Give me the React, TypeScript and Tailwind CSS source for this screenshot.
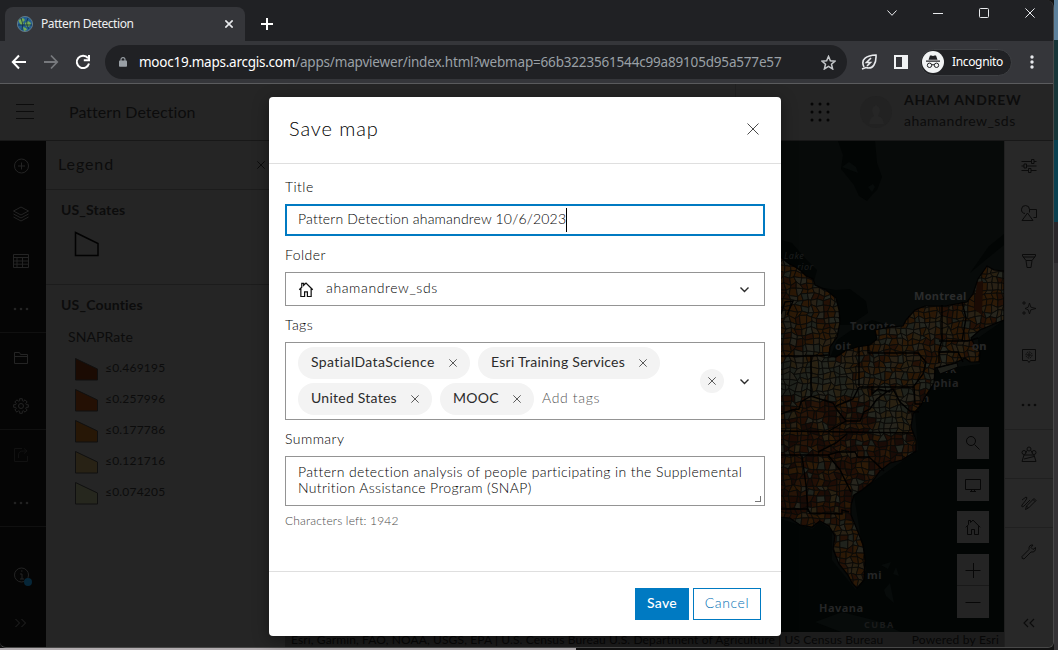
import React from "react";

const Icon = ({ className, box = 16, w = 1, children }: { className: string; box?: number; w?: number; children: React.ReactNode }) => (
  <svg viewBox={`0 0 ${box} ${box}`} className={`shrink-0 ${className}`} fill="none" stroke="currentColor" strokeWidth={w}>{children}</svg>
);
const Cross = ({ className, w = 1 }: { className: string; w?: number }) => (
  <Icon className={className} w={w} box={12}><path d="M.5.5l11 11M11.5.5l-11 11" /></Icon>
);
const Chevron = () => (
  <Icon className="h-[9px] w-[9px] text-[#2b2b2b]" box={9} w={1.4}><path d="M.5 2.500l4 4 4-4" /></Icon>
);
const House = ({ className, w = 1 }: { className: string; w?: number }) => (
  <Icon className={className} w={w}><path d="M.8 8.3L3.5 5.6V1.5h2v2L8 1.1l7.2 7.2M2.500 7.200v8.300h4v-5h3v5h4V7.200" /></Icon>
);
const Dots = ({ className }: { className: string }) => (
  <svg viewBox="0 0 16 4" className={`h-1 w-4 shrink-0 ${className}`} fill="currentColor"><circle cx="2" cy="2" r="1.3" /><circle cx="8" cy="2" r="1.3" /><circle cx="14" cy="2" r="1.3" /></svg>
);

function Chrome() {
  return (
    <header className="shrink-0 bg-[#202124] font-['Noto_Sans',sans-serif] text-white">
      <div className="flex h-[41px] items-start">
        <div className="mt-[7px] ml-[5px] flex h-[34px] w-[240px] items-center rounded-t-lg bg-[#35363a] pr-[12px] pl-[12px]">
          <svg viewBox="0 0 16 16" className="h-4 w-4"><circle cx="8" cy="8" r="7.600" fill="#245f93" stroke="#6d8791" strokeWidth=".8" /><path d="M2 4l4-2 2 2-2 2 1 2-3 1-2-3zM8 7l3-2 3 2-1 3-3 1-2-2zM6 11l3 1 1 2-3 1z" fill="#75ad52" /><path d="M1 9h14M4 2q3 6 1 12M11 2q-3 6 1 11" fill="none" stroke="#122c42" strokeWidth=".8" /></svg>
          <span className="ml-2 grow text-[12px] tracking-[-0.4px] text-[#eeeff0]">Pattern Detection</span>
          <Cross className="h-[8px] w-[8px] text-[#e8eaed]" w={2.400} />
        </div>
        <Icon className="mt-[18px] ml-[16px] h-3 w-3" box={12} w={2}><path d="M6 0v12M0 6h12" /></Icon>
        <div className="mt-[8px] mr-[18px] ml-auto flex items-center text-[#e8eaed]">
          <Icon className="h-[10px] w-[10px]" box={10}><path d="M.5 2.500L5 7.300l4.500-4.800" /></Icon>
          <Icon className="ml-[36px] h-[10px] w-[10px]" box={10}><path d="M0 5.500h10" /></Icon>
          <Icon className="ml-[36px] h-[10px] w-[10px]" box={10}><rect x=".5" y=".5" width="9" height="9" rx="1" /></Icon>
          <Cross className="ml-[36px] h-[10px] w-[10px]" w={1.200} />
        </div>
      </div>
      <div className="flex h-[42px] items-center bg-[#35363a]">
        <Icon className="ml-[11px] h-4 w-4" w={2}><path d="M15 8H2M8 1.500L1.800 8 8 14.500" /></Icon>
        <Icon className="ml-[16px] h-4 w-4 text-[#77797d]" w={1.800}><path d="M1 8h13M8 1.500L14.200 8 8 14.500" /></Icon>
        <Icon className="ml-[16px] h-4 w-4" w={2}><path d="M13 4.200A6.200 6.200 0 1 0 14 9.500M14 1v5.200H8.800" /></Icon>
        <div className="ml-[14px] flex h-[34px] w-[742px] items-center rounded-full bg-[#202124] pr-[11px] pl-[14px]">
          <svg viewBox="0 0 10 12" className="h-3 w-2"><rect y="4.200" width="10" height="7.800" rx="1" fill="#9aa0a6" /><path d="M2.500 5V3a2.500 2.500 0 0 1 5 0v2" fill="none" stroke="#9aa0a6" strokeWidth="1.400" /></svg>
          <span className="ml-[12px] grow text-[13.5px] whitespace-nowrap text-[#9aa0a6]"><span className="tracking-[-0.25px] text-white">mooc19.maps.arcgis.com</span><span className="tracking-[-0.18px]">/apps/mapviewer/index.html?webmap=66b3223561544c99a89105d95a577e57</span></span>
          <Icon className="h-[15px] w-[15px] text-[#c4c7ca]" w={1.600}><path d="M8 1.500l2 4.700 5 .4-3.800 3.300 1.200 5L8 12.200l-4.400 2.700 1.200-5L1 6.600l5-.400z" /></Icon>
        </div>
        <Icon className="ml-[14px] h-4 w-4 text-[#e8eaed]" w={1.600}><path d="M3 13C-1 5 6 1.500 15 1c.5 8-3 15-10 12.500L1 15M10 4L5.500 8.500h4L6 12" /></Icon>
        <svg viewBox="0 0 14 14" className="ml-[17px] h-[14px] w-[14px]"><path d="M0 0h14v14H0zM2 2v10h6V2z" fill="#f1f3f4" fillRule="evenodd" /></svg>
        <div className="ml-[12px] flex h-[27px] w-[92px] items-center rounded-full border border-[#3e4043] bg-[#202124]">
          <svg viewBox="0 0 22 22" className="ml-px h-[22px] w-[22px] shrink-0"><circle cx="11" cy="11" r="11" fill="#f1f3f4" /><path d="M4 9.500h14v1.200H4zM6.500 8.800L8 4.500h1.500l1.500.6 1.500-.6H14l1.500 4.300z" fill="#202124" /><g fill="none" stroke="#202124"><circle cx="7.500" cy="14.300" r="2.200" /><circle cx="14.500" cy="14.300" r="2.200" /><path d="M9.700 14q1.300-.8 2.600 0" /></g></svg>
          <span className="ml-[8px] text-[12px] tracking-[-0.35px]">Incognito</span>
        </div>
        <svg viewBox="0 0 4 14" className="ml-[18px] h-[14px] w-1" fill="#e8eaed"><circle cx="2" cy="2" r="1.700" /><circle cx="2" cy="7" r="1.700" /><circle cx="2" cy="12" r="1.700" /></svg>
      </div>
      <div className="h-px bg-[#5b5c5e]" />
    </header>
  );
}

function LeftRail() {
  return (
    <nav className="flex w-[46px] shrink-0 flex-col bg-[#050505] pr-1 text-[#242424]">
      <div className="-mr-1 flex h-[192px] flex-col items-center border-b border-[#101010] pt-[17px] pr-1">
        <Icon className="h-4 w-4"><circle cx="8.500" cy="8" r="7" /><path d="M8.500 4.500v7M5 8h7" /></Icon>
        <Icon className="mt-[32px] h-4 w-4"><path d="M.5 5L8 1l7.500 4L8 9zM.5 8L8 12l7.500-4M.5 11L8 15l7.500-4" /></Icon>
        <Icon className="mt-[31px] h-4 w-4"><path d="M.5 1.500h15v13H.5zM.5 4.500h15M.5 8h15M.5 11.200h15M4 4.500v10M9.500 4.500v10" /></Icon>
        <Dots className="mt-[38px]" />
      </div>
      <div className="-mr-1 flex h-[97px] flex-col items-center border-b border-[#101010] pt-[17px] pr-1">
        <Icon className="h-4 w-4"><path d="M1.500 13.500v-11h5l1 2h7v9zM1.500 6.500h13" /></Icon>
        <Icon className="mt-[32px] h-4 w-4"><circle cx="8" cy="8" r="2.500" /><path d="M6.700.7h2.600v2l1.300.5L12 1.800 14.200 4l-1.400 1.400.5 1.300h2v2.600h-2l-.5 1.300 1.400 1.400-2.200 2.200-1.400-1.400-1.300.5v2H6.700v-2l-1.300-.5L4 14.200 1.800 12l1.400-1.400-.5-1.300h-2V6.700h2l.5-1.300L1.800 4 4 1.800l1.400 1.400 1.300-.5z" /></Icon>
      </div>
      <div className="-mr-1 flex h-[97px] flex-col items-center border-b border-[#101010] pt-[17px] pr-1 text-[#111]">
        <Icon className="h-4 w-4"><path d="M9 1.500H1.500v13h13V9M5.500 11V8q0-4 5-4h3M11 1.500L14 4l-3 2.500" /></Icon>
        <Dots className="mt-[38px] text-[#222]" />
      </div>
      <div className="flex grow flex-col items-center pt-[40px]">
        <div className="relative h-4 w-4"><Icon className="h-4 w-4"><circle cx="8.500" cy="8" r="7" /><path d="M7 7h2v5M7 12h4M8 4h1.500" /></Icon><i className="absolute top-[11px] left-[11px] h-2 w-2 rounded-full bg-[#062638]" /></div>
        <Icon className="mt-[32px] h-4 w-4"><path d="M2.500 4l4 4-4 4M8.500 4l4 4-4 4" /></Icon>
      </div>
    </nav>
  );
}

const classes = [["#1b0b03", "≤0.469195"], ["#241004", "≤0.257996"], ["#271706", "≤0.177786"], ["#282215", "≤0.121716"], ["#26271e", "≤0.074205"]];

function Legend() {
  return (
    <section className="w-[239px] shrink-0 bg-[#252525] text-[#0c0c0c]">
      <div className="flex h-[49px] items-center border-b border-[#1c1c1c] pl-[12px]">
        <h2 className="grow pb-[2px] text-[16px] tracking-[0.9px]">Legend</h2>
        <Cross className="mr-[20px] h-2 w-2" w={1.500} />
      </div>
      <div className="h-[95px] border-b border-[#1c1c1c] pt-[10px] pl-[15px]">
        <h3 className="text-[14px] leading-5 font-bold tracking-[0.15px]">US_States</h3>
        <svg viewBox="0 0 25 26" className="mt-[11px] ml-[13px] h-[26px] w-[25px]"><path d="M1.500 1.500L24 12.500v12H1.500z" fill="none" stroke="#020202" strokeWidth="1.500" /></svg>
      </div>
      <div className="pt-[10px] pl-[15px]">
        <h3 className="text-[14px] leading-5 font-bold tracking-[0.18px]">US_Counties</h3>
        <h4 className="mt-[12px] ml-[7px] text-[14px] leading-5 tracking-[0.1px]">SNAPRate</h4>
        <ul className="mt-[5px] ml-[13px]">
          {classes.map(([c, t]) => (
            <li key={t} className="flex h-[31px] items-center">
              <svg viewBox="0 0 25 24" className="mt-[3px] h-6 w-[25px]"><path d="M1.500 1.500L23.500 12v11h-22z" fill={c} stroke="#101010" /></svg>
              <span className="ml-[6px] text-[12px] leading-[18px] tracking-[0.2px]">{t}</span>
            </li>
          ))}
        </ul>
      </div>
    </section>
  );
}

const land = "M775 253L788 263L797 268L801 271L806 276L813 279L815 285L826 290L836 298L839 310L840 322L837 337L830 347L829 356L836 357L845 351L857 347L870 345L877 339L875 330L890 327L903 326L906 320L915 310L925 306H945L967 302L973 294L978 279L987 266L994 270L1004 271V320L994 324L980 330L971 338L974 344L980 352L979 362L970 362L965 358L955 363L935 368L934 383L925 397L921 405L913 414L911 427L916 440L916 451L902 460L890 463L880 471L872 482L862 490L854 495L851 505L851 515L858 532L863 545L865 560L864 580L857 588L852 583L848 575L839 564L833 549L835 536L829 526L820 521L812 527L800 525L790 518L775 517z";
const borders = "M781 356H812L828 355M811 356V396M859 347V386M868 345V353H918L926 362L923 374L914 386L915 404H922M859 387H914M781 414L792 410L799 409L801 402L811 396L820 399L833 403L838 411L846 421L860 421L864 412L870 409L877 399L888 391L893 389L900 402L910 411L919 412M872 386V394L878 389L890 392M859 387L853 399L836 406M846 421L829 431M781 431L913 433M847 434L836 443L818 452M781 455H828L838 452L855 452L858 457H869L884 471M802 456L806 485L808 512M828 455L840 470L851 492M781 509H808L810 513L842 514V510L849 512M942 305V340L939 350V363M962 302L966 318L962 341M939 341H968L978 338M939 352H958L963 362M781 314L785 302L793 301L787 315";

/* Jittered mesh of county-sized cells. */
const cells = (() => {
  let s = 77;
  const rnd = () => { s = (s * 16807) % 2147483647; return s / 2147483647; };
  const step = 5.6, cols = 42, rows = 62;
  const pts = Array.from({ length: rows }, (_, r) => Array.from({ length: cols }, (_, c) => [779 + c * step + (rnd() - 0.5) * 4, 250 + r * step + (rnd() - 0.5) * 4]));
  const pale = ["#24261f", "#27251d", "#292112", "#1f221c"], orange = ["#2b1806", "#2d1a07", "#241106", "#292115"], red = ["#1e0c05", "#230f05", "#190b06", "#281508"];
  const out: { d: string; f: string }[] = [];
  for (let r = 0; r < rows - 1; r++) for (let c = 0; c < cols - 1; c++) {
    const [a, b, e, g] = [pts[r][c], pts[r][c + 1], pts[r + 1][c + 1], pts[r + 1][c]];
    const x = a[0], y = a[1];
    const set = x < 850 && y > 356 && y < 395 ? pale : y > 388 && y < 432 && x > 868 && x < 905 ? pale : y > 390 && y < 515 ? (rnd() < 0.6 ? red : rnd() < 0.4 ? pale : orange) : rnd() < 0.35 ? pale : orange;
    out.push({ d: `M${a}L${b}L${e}L${g}z`, f: set[Math.floor(rnd() * 4)] });
  }
  return out;
})();

function MapCanvas() {
  return (
    <svg viewBox="781 141 223 491" className="h-[491px] w-[223px]">
      <defs><clipPath id="land"><path d={land} /></clipPath></defs>
      <rect x="781" y="141" width="223" height="491" fill="#070a09" />
      <path d="M838 141H875L877 163L882 177L877 190L872 195L867 201L859 196L854 185L841 169L843 155zM781 240L792 243L805 258L817 270L814 281L781 265zM818 287L836 290L850 289L866 301L868 313L850 325H837zM1004 234L989 246L970 273L982 263L1004 245zM837 340L853 329L872 320L895 327L870 346L830 358zM1004 320L978 338L980 364L935 370L915 410L918 450L854 495L866 570L856 590L832 560L832 530L820 522L812 529L781 519V632H1004z" fill="#020504" />
      <path d="M842 167l7-5 7 5 2 6zM868 187l5-3 2 3-3 5zM881 565l10-3-3 7zM896 567l3 9-6-2zM884 590l6-7 4 20-8-7zM815 622l27-10 35 9 24 11h-60z" fill="#070b0a" />
      <g fill="#222323" fontFamily="Noto Sans" fontSize="11" fontWeight="700" letterSpacing=".5">
        <text x="850" y="329.500">Toronto</text>
        <text x="835" y="350">oit</text><text x="972" y="350">on</text><text x="945" y="373" fontSize="10">rk</text><text x="933" y="387">phia</text><text x="922" y="402">n</text>
        <g fontStyle="italic" fontSize="9" fontWeight="400" fill="#1c1e1e"><text x="784" y="259">Lake</text><text x="797" y="270">rior</text></g>
      </g>
      <path d={land} fill="#0b0b09" />
      <g clipPath="url(#land)">
        {cells.map((c, i) => <path key={i} d={c.d} fill={c.f} stroke="#0b0b09" strokeWidth=".9" />)}
        <path d="M977 282L983 281L982 315L974 309z" fill="#1b0b04" />
      </g>
      <path d={land} fill="none" stroke="#020202" strokeWidth="1.200" />
      <path d={borders} fill="none" stroke="#010101" strokeWidth="1.400" />
      <path d="M937 368L957 363L958 367L940 374z" fill="#1e1f1a" stroke="#020202" />
      <g fill="#252626" fontFamily="Noto Sans" fontSize="11" fontWeight="700" letterSpacing=".5">
        <text x="914" y="300" fill="#2b2c2c" letterSpacing=".3">Montreal</text>
        <text x="972" y="350">on</text>
        <text x="867" y="579">mi</text><text x="819" y="612">Havana</text>
        <text x="864" y="628" fill="#1a1b1b" fontSize="9" letterSpacing="1.500">CUBA</text>
      </g>
    </svg>
  );
}

function RightRail() {
  return (
    <nav className="flex w-[49px] shrink-0 flex-col items-center border-l border-[#202020] bg-[#282828] pt-[17px] text-[#0b0b0b]">
      <Icon className="h-4 w-4"><path d="M.5 3.500h10M13 3.500h2.500M.5 8H3M5.500 8h10M.5 12.500h7M10 12.500h5.500M10.500 1.500h2.500v4h-2.500zM3 6h2.500v4H3zM7.500 10.500H10v4H7.500z" /></Icon>
      <Icon className="mt-[31px] h-4 w-4"><path d="M8.500 4.500A4 4 0 1 0 4 8.500M8.500 7.500v-3h7v8h-3M1 15.500L6.500 8l5.500 7.500z" /></Icon>
      <Icon className="mt-[32px] h-4 w-4"><path d="M1.500 1.500h13v1.500L11 7.500H5L1.500 3zM2 4h12M5 7.500l1 7h4l1-7" /></Icon>
      <Icon className="mt-[31px] h-4 w-4"><path d="M8.500 3l1.300 4.200L15 8.500l-5.200 1.300L8.500 14l-1.300-4.200L4 8.500l3.200-1.300zM3 1v4M1 3h4M3 11v4M1 13h4" strokeWidth=".9" /></Icon>
      <Icon className="mt-[32px] h-4 w-4"><path d="M1.500 1.500h13v11h-5L8 14.500l-1.500-2h-5z" /><circle cx="8" cy="7" r="3" strokeDasharray="1.500 .8" /><circle cx="8" cy="7" r="1.200" /></Icon>
      <Dots className="mt-[39px]" />
      <div className="mt-[22px] flex h-[50px] w-full items-center justify-center border-y border-[#202020]"><Icon className="h-4 w-4"><path d="M1 15.500L3 9h10l2 6.500zM3 13l10-2.500M4.500 7L6 4.500M11.500 7L10 4.500" /><circle cx="3" cy="6.500" r="2" /><circle cx="8" cy="3" r="2" /><circle cx="13" cy="6.500" r="2" /></Icon></div>
      <div className="flex h-[49px] w-full items-center justify-center border-b border-[#202020]"><Icon className="h-4 w-4"><path d="M4.500 14.500l1-3.500L13 3.500l2 2L7.500 13zM12 4.500l2 2M5.500 11l2 2M1 5l4-3q2 0 0 3l-4 5q-1 3 2 1L9 5" /></Icon></div>
      <Icon className="mt-[16px] h-4 w-4"><path d="M14.500 3.500l-2.500 2-2-2 2-2.500Q7.500.5 8 5.500L1 12.500q-.5 2.500 2 2.500l7-7q5 .5 4.500-4.500z" /></Icon>
      <Icon className="mt-[55px] h-4 w-4" w={1.100}><path d="M7 4L3 8l4 4M13 4L9 8l4 4" /></Icon>
    </nav>
  );
}

const ctl = "flex w-8 items-center justify-center bg-[#242424] text-[#070707]";

function Page() {
  return (
    <main className="flex h-[563px] flex-col font-[Lato,sans-serif]">
      <div className="flex h-[57px] shrink-0 items-center border-b border-[#181818] bg-[#252525] text-[#0c0c0c]">
        <Icon className="ml-[16px] h-[18px] w-[18px]" box={18}><path d="M0 1.500h18M0 8.500h18M0 15.500h18" /></Icon>
        <h1 className="ml-[35px] grow pb-px text-[16px] tracking-[0.05px]">Pattern Detection</h1>
        <div className="h-full w-px bg-[#202020]" />
        <svg viewBox="0 0 20 20" className="ml-[74px] h-5 w-5" fill="#050505">{[2, 10, 18].map(y => [2, 10, 18].map(x => <circle key={`${x}-${y}`} cx={x} cy={y} r="1.500" />))}</svg>
        <svg viewBox="0 0 32 32" className="ml-[30px] h-8 w-8"><circle cx="16" cy="16" r="16" fill="#222" /><path d="M9 28q1-7 5-8-5-8 2-11 7 3 2 11 5 1 6 8z" fill="#262626" /></svg>
        <div className="ml-[12px] w-[149px] pb-[4px]"><div className="text-[14px] leading-[21px] font-bold tracking-[0.75px]">AHAM ANDREW</div><div className="text-[14px] leading-[21px] tracking-[0.45px]">ahamandrew_sds</div></div>
      </div>
      <div className="flex min-h-0 grow">
        <LeftRail />
        <Legend />
        <div className="flex grow flex-col overflow-hidden bg-[#070a09]">
          <div className="relative flex h-[491px] justify-end">
            <MapCanvas />
            <div className="absolute top-[286px] right-[15px] flex flex-col">
              <div className={`${ctl} h-8`}><Icon className="h-4 w-4"><circle cx="6" cy="6" r="4.500" /><path d="M9.500 9.500l5 5" /></Icon></div>
              <div className={`${ctl} mt-[10px] h-8`}><Icon className="h-4 w-4"><path d="M.5 2.500h15v10H.5zM6.500 12.500v2M9.500 12.500v2M5 14.500h6" /></Icon></div>
              <div className={`${ctl} mt-[10px] h-8`}><House className="h-4 w-4" /></div>
              <div className={`${ctl} mt-[11px] h-8 border-b border-[#191919]`}><Icon className="h-4 w-4"><path d="M.5 8.500h15M8.500 1v15" /></Icon></div>
              <div className={`${ctl} h-8`}><Icon className="h-4 w-4"><path d="M.5 8.500h15" /></Icon></div>
            </div>
          </div>
          <div className="flex h-[15px] items-center justify-between bg-[#1c1c1c] pr-[5px] pl-[6px] text-[12px] leading-[13px] whitespace-nowrap text-[#070707]">
            <span className="pb-px tracking-[0.12px]">Esri, Garmin, FAO, NOAA, USGS, EPA | U.S. Census Bureau U.S. Department of Agriculture | US Census Bureau</span><span className="pb-px tracking-[0.2px]">Powered by Esri</span>
          </div>
        </div>
        <RightRail />
      </div>
    </main>
  );
}

function Chip({ label, className }: { label: string; className: string }) {
  return <div className={`flex h-8 shrink-0 items-center justify-between rounded-full bg-[#f3f3f3] px-[13px] text-[#2b2b2b] ${className}`}><span className="pb-[3px] whitespace-nowrap">{label}</span><Cross className="h-2 w-2 text-[#5a5a5a]" w={1.500} /></div>;
}

const label = "h-[27px] leading-[19px] tracking-[0.45px]";

function SaveDialog() {
  return (
    <div role="dialog" className="absolute top-[97px] left-[269px] flex h-[539px] w-[512px] flex-col rounded-[4px] bg-white font-[Lato,sans-serif] text-[14px] font-light text-black shadow-[0_4px_16px_rgba(0,0,0,0.4)]">
      <div className="flex h-[67px] shrink-0 items-center justify-between border-b border-[#dfdfdf] pr-[22px] pl-[20px]">
        <h2 className="pb-[4px] text-[20px] tracking-[0.9px]">Save map</h2><Cross className="mb-[3px] h-3 w-3 text-[#4a4a4a]" />
      </div>
      <div className="flex grow flex-col px-4 pt-[13px]">
        <label className={label}>Title</label>
        <div className="flex h-8 items-center border-2 border-[#007ac2] px-[11px]"><span className="pb-[3px] tracking-[0.18px]">Pattern Detection ahamandrew 10/6/2023</span><i className="h-6 w-px bg-black" /></div>
        <label className={`mt-[9px] ${label}`}>Folder</label>
        <div className="flex h-[34px] items-center border border-[#949494] pr-[15px] pl-[12px]"><House className="h-[15px] w-4 text-[#111]" w={1.300} /><span className="ml-[12px] grow pb-[3px] tracking-[0.62px]">ahamandrew_sds</span><Chevron /></div>
        <label className={`mt-[9px] ${label}`}>Tags</label>
        <div className="flex h-[78px] items-center border border-[#949494] pr-[15px] pl-[12px]">
          <div className="flex grow flex-col gap-1 font-normal">
            <div className="flex gap-2"><Chip label="SpatialDataScience" className="w-[172px] tracking-[0.4px]" /><Chip label="Esri Training Services" className="w-[182px] tracking-[0.27px]" /></div>
            <div className="flex items-center gap-2"><Chip label="United States" className="w-[134px] tracking-[0.25px]" /><Chip label="MOOC" className="w-[94px] tracking-[0.3px]" /><span className="pb-[3px] font-light tracking-[0.65px] text-[#555]">Add tags</span></div>
          </div>
          <div className="mr-[16px] flex h-6 w-6 items-center justify-center rounded-full bg-[#f3f3f3]"><Cross className="h-2 w-2 text-[#5a5a5a]" w={1.500} /></div><Chevron />
        </div>
        <label className={`mt-[9px] ${label}`}>Summary</label>
        <div className="relative h-[50px] border border-[#949494] px-3 pt-[7px] leading-[16px] whitespace-nowrap"><span className="tracking-[0.38px]">Pattern detection analysis of people participating in the Supplemental</span><br /><span className="tracking-[0.35px]">Nutrition Assistance Program (SNAP)</span><i className="absolute right-[3px] bottom-[3px] h-[6px] w-[6px] border-r border-b border-[#777]" /></div>
        <p className="mt-[6px] text-[12px] leading-[18px] tracking-[0.17px] text-[#4a4a4a]">Characters left: 1942</p>
      </div>
      <div className="flex h-[65px] shrink-0 justify-end gap-1 border-t border-[#dfdfdf] pt-4 pr-5 font-normal">
        <button className="h-8 w-[54px] bg-[#007ac2] pb-[3px] font-medium tracking-[0.3px] text-white">Save</button>
        <button className="h-8 w-[68px] border border-[#007ac2] pb-[3px] font-light tracking-[0.6px] text-[#0070b4]">Cancel</button>
      </div>
    </div>
  );
}

export default function App() {
  return (
    <div className="relative flex h-[650px] w-[1058px] overflow-hidden bg-[#111]">
      <div className="flex h-[650px] w-[1054px] shrink-0 flex-col">
        <div className="h-[648px] shrink-0 overflow-hidden rounded-tr-lg rounded-b-md border-r border-b border-[#484848] bg-[#252525]"><Chrome /><Page /></div>
        <div className="h-[2px] w-[576px] bg-[#b3aeb1]" />
      </div>
      <div className="flex w-1 flex-col"><div className="h-10 bg-[#5d819c]" /><div className="h-[100px] bg-[#173538]" /><div className="h-[82px] bg-[#0a4050]" /><div className="h-[41px] bg-[#29262a]" /><div className="grow bg-[#343235]" /></div>
      <SaveDialog />
    </div>
  );
}
